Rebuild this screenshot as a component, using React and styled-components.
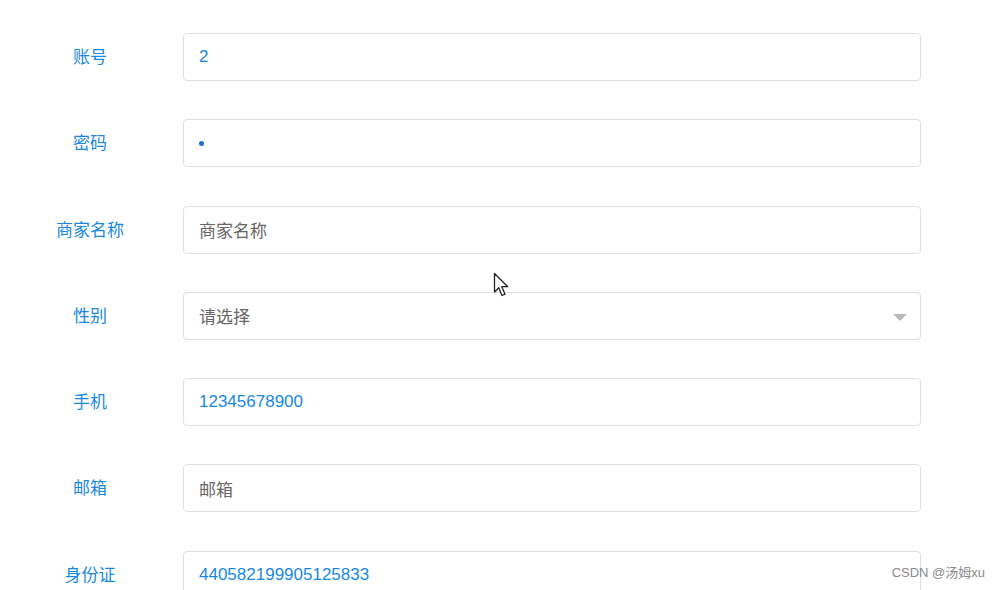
import React from 'react';
import styled, { createGlobalStyle } from 'styled-components';

const GlobalStyle = createGlobalStyle`
  html, body {
    margin: 0;
    padding: 0;
    background: #ffffff;
    overflow: hidden;
  }
  body {
    font-family: "Noto Sans CJK SC", "Liberation Sans", Arial, sans-serif;
  }
`;

const Page = styled.div`
  position: relative;
  width: 1001px;
  height: 590px;
  overflow: hidden;
  box-sizing: border-box;
  padding: 33px 80px 0 40px;
`;

const Form = styled.div`
  display: flex;
  flex-direction: column;
  gap: 38.3px;
`;

const Row = styled.div`
  display: flex;
  align-items: center;
  gap: 43px;
`;

const Label = styled.label`
  width: 100px;
  flex-shrink: 0;
  text-align: center;
  font-size: 17px;
  line-height: 20px;
  margin-top: -2px;
  color: #1a88e0;
`;

const Field = styled.div`
  position: relative;
  flex: 1;
  height: 48px;
  box-sizing: border-box;
  border: 1px solid #dcdfe6;
  border-radius: 4px;
  display: flex;
  align-items: center;
  padding: 0 15px;
  font-size: 17px;
  font-family: ${p => (p.$latin ? '"Liberation Sans", Arial, sans-serif' : 'inherit')};
  color: ${p => (p.$placeholder ? '#666666' : '#1a88e0')};
`;

const Dot = styled.span`
  width: 5px;
  height: 5px;
  border-radius: 50%;
  background: #1a6fd0;
`;

const Caret = styled.span`
  position: absolute;
  right: 13px;
  top: 21px;
  width: 0;
  height: 0;
  border-left: 7px solid transparent;
  border-right: 7px solid transparent;
  border-top: 7px solid #b8b8b8;
`;

const Pointer = styled.svg`
  position: absolute;
  left: 493px;
  top: 272px;
`;

const Watermark = styled.div`
  position: absolute;
  right: 16px;
  bottom: 9px;
  font-size: 13px;
  color: #8a8a8a;
  font-family: "Liberation Sans", "Noto Sans CJK SC", Arial, sans-serif;
`;

const rows = [
  { label: '账号', value: '2', latin: true },
  { label: '密码', dot: true },
  { label: '商家名称', value: '商家名称', placeholder: true },
  { label: '性别', value: '请选择', placeholder: true, select: true },
  { label: '手机', value: '12345678900', latin: true },
  { label: '邮箱', value: '邮箱', placeholder: true },
  { label: '身份证', value: '440582199905125833', latin: true },
];

export default function App() {
  return (
    <Page>
      <GlobalStyle />
      <Form>
        {rows.map(r => (
          <Row key={r.label}>
            <Label>{r.label}</Label>
            <Field $placeholder={r.placeholder} $latin={r.latin}>
              {r.dot ? <Dot /> : r.value}
              {r.select && <Caret />}
            </Field>
          </Row>
        ))}
      </Form>
      <Pointer width="18" height="26" viewBox="0 0 18 26">
        <path
          d="M1.5 1.5 L1.5 20 L5.8 15.8 L9 23.5 L12 22.2 L8.8 14.7 L14.8 14.7 Z"
          fill="#ffffff"
          stroke="#222222"
          strokeWidth="1.3"
          strokeLinejoin="round"
        />
      </Pointer>
      <Watermark>CSDN @汤姆xu</Watermark>
    </Page>
  );
}
